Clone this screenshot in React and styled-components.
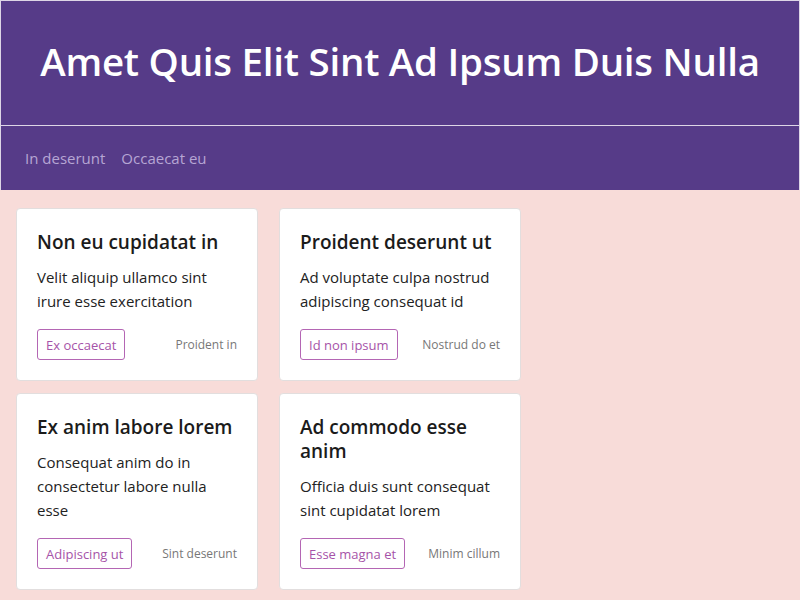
import styled, { createGlobalStyle } from 'styled-components'

const GlobalStyle = createGlobalStyle`
  * { box-sizing: border-box; }
  body {
    margin: 0;
    background: #f8dcd9;
    font-family: "Open Sans", "Noto Sans", sans-serif;
  }
`

const cards = [
  { title: 'Non eu cupidatat in', text: 'Velit aliquip ullamco sint irure esse exercitation', tag: 'Ex occaecat', note: 'Proident in' },
  { title: 'Proident deserunt ut', text: 'Ad voluptate culpa nostrud adipiscing consequat id', tag: 'Id non ipsum', note: 'Nostrud do et' },
  { title: 'Ex anim labore lorem', text: 'Consequat anim do in consectetur labore nulla esse', tag: 'Adipiscing ut', note: 'Sint deserunt' },
  { title: 'Ad commodo esse anim', text: 'Officia duis sunt consequat sint cupidatat lorem', tag: 'Esse magna et', note: 'Minim cillum' },
]

const Header = styled.header`
  background: #563b88;
`

const TitleBar = styled.div`
  border: 1px solid #ddd6e6;
  height: 126px;
  display: flex;
  align-items: center;
  justify-content: center;
  padding-bottom: 4px;
`

const Title = styled.h1`
  margin: 0;
  color: #fff;
  font-size: 38.5px;
  font-weight: 600;
  letter-spacing: -0.25px;
`

const Nav = styled.nav`
  height: 64px;
  border-left: 1px solid #ddd6e6;
  border-right: 1px solid #ddd6e6;
  display: flex;
  align-items: center;
  gap: 16px;
  padding: 0 24px;
`

const NavLink = styled.a`
  color: #b6a6d4;
  font-size: 15px;
  text-decoration: none;
`

const Grid = styled.main`
  display: grid;
  grid-template-columns: repeat(2, 242px);
  column-gap: 21px;
  row-gap: 12px;
  padding: 18px 16px 10px;
`

const Card = styled.article`
  display: flex;
  flex-direction: column;
  background: #fff;
  border: 1px solid #e2dede;
  border-radius: 4px;
  padding: 21px 20px 20px;
`

const CardTitle = styled.h2`
  margin: 0 0 11px;
  font-size: 19px;
  line-height: 24px;
  font-weight: 600;
  color: #1b1b1b;
`

const CardText = styled.p`
  margin: 0 0 16px;
  font-size: 15px;
  line-height: 24px;
  color: #222;
`

const Footer = styled.div`
  display: flex;
  align-items: center;
  justify-content: space-between;
  margin-top: auto;
`

const Tag = styled.button`
  height: 31px;
  padding: 0 8px;
  border: 1px solid #b466b4;
  border-radius: 3px;
  background: #fff;
  color: #a653a8;
  font-family: inherit;
  font-size: 13px;
`

const Note = styled.span`
  font-size: 12px;
  color: #777;
`

export default function App() {
  return (
    <>
      <GlobalStyle />
      <Header>
        <TitleBar>
          <Title>Amet Quis Elit Sint Ad Ipsum Duis Nulla</Title>
        </TitleBar>
        <Nav>
          <NavLink href="#">In deserunt</NavLink>
          <NavLink href="#">Occaecat eu</NavLink>
        </Nav>
      </Header>
      <Grid>
        {cards.map((c) => (
          <Card key={c.title}>
            <CardTitle>{c.title}</CardTitle>
            <CardText>{c.text}</CardText>
            <Footer>
              <Tag>{c.tag}</Tag>
              <Note>{c.note}</Note>
            </Footer>
          </Card>
        ))}
      </Grid>
    </>
  )
}
